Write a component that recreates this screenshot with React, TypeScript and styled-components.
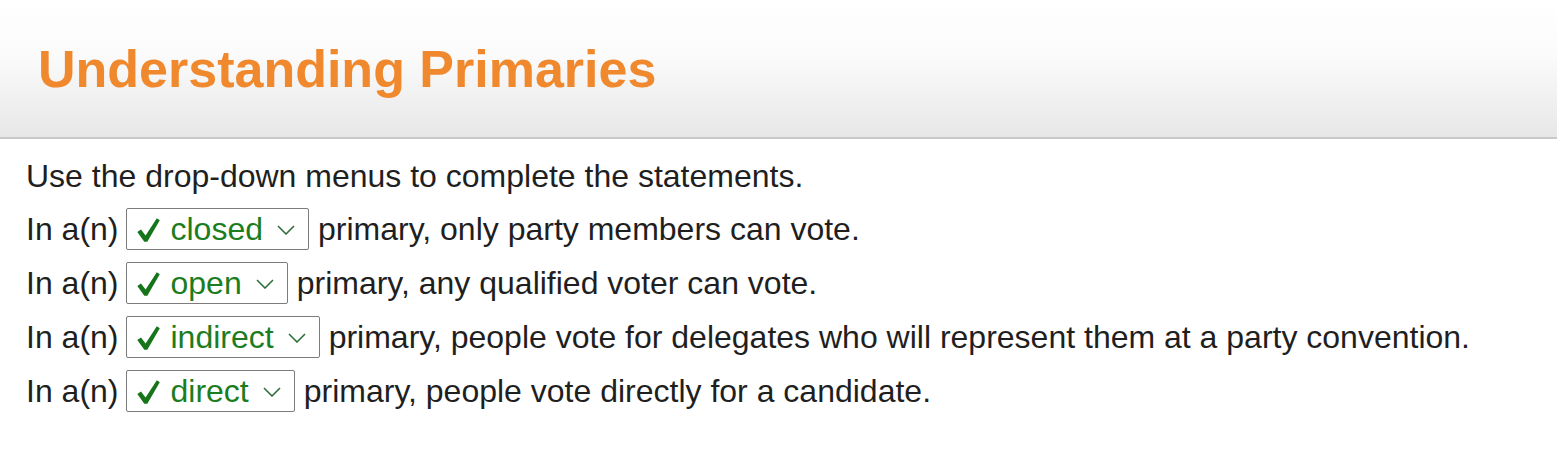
import React from "react";
import styled, { createGlobalStyle } from "styled-components";

const Global = createGlobalStyle`
  html, body { margin: 0; padding: 0; background: #ffffff; }
  body { font-family: "Liberation Sans", Arial, sans-serif; }
`;

const Header = styled.header`
  height: 137px;
  box-sizing: content-box;
  padding: 0 0 0 38px;
  display: flex;
  align-items: flex-start;
  background: linear-gradient(to bottom, #ffffff 0%, #fbfbfb 40%, #e7e7e7 100%);
  border-bottom: 2px solid #c9c9c9;
`;

const Title = styled.h1`
  margin: 39px 0 0 0;
  font-family: "Liberation Sans", Arial, sans-serif;
  font-weight: bold;
  font-size: 52px;
  line-height: 60px;
  color: #f0892e;
`;

const Body = styled.main`
  padding: 9px 26px 0 26px;
  color: #1f1f1f;
  font-size: 32px;
`;

const Line = styled.div<{ $shift?: number }>`
  display: flex;
  align-items: center;
  gap: 8px;
  height: 54px;
  box-sizing: border-box;
  padding-top: ${(p) => p.$shift ?? 0}px;
  white-space: nowrap;
`;

const Select = styled.div`
  display: flex;
  align-items: center;
  height: 42px;
  box-sizing: border-box;
  margin-right: 1px;
  padding: 0 13px 0 10px;
  border: 1px solid #7c7c7c;
  border-radius: 2px;
  background: #ffffff;
  color: #1c7d1f;
`;

const Check = styled.svg`
  width: 23px;
  height: 24px;
  margin-right: 10px;
  margin-top: 1px;
  flex: none;
`;

const Choice = styled.span`
  margin-right: 14px;
`;

const Chevron = styled.svg`
  width: 18px;
  height: 10px;
  flex: none;
  margin-top: 2px;
`;

type Row = { answer: string; rest: string };

const rows: Row[] = [
  { answer: "closed", rest: "primary, only party members can vote." },
  { answer: "open", rest: "primary, any qualified voter can vote." },
  {
    answer: "indirect",
    rest: "primary, people vote for delegates who will represent them at a party convention.",
  },
  { answer: "direct", rest: "primary, people vote directly for a candidate." },
];

const Dropdown = ({ value }: { value: string }) => (
  <Select>
    <Check viewBox="0 0 23 24" aria-hidden>
      <path
        d="M0.3 14 L4 11.4 L8.6 17.4 L19.8 0.3 L22.8 2.2 L10.3 23.7 L7.3 23.7 Z"
        fill="#16741b"
      />
    </Check>
    <Choice>{value}</Choice>
    <Chevron viewBox="0 0 18 10" aria-hidden>
      <polyline points="1,1 9,9 17,1" fill="none" stroke="#2f6f3c" strokeWidth="1.6" />
    </Chevron>
  </Select>
);

export default function App() {
  return (
    <>
      <Global />
      <Header>
        <Title>Understanding Primaries</Title>
      </Header>
      <Body>
        <Line $shift={3}>Use the drop-down menus to complete the statements.</Line>
        {rows.map((r) => (
          <Line key={r.answer}>
            <span>In a(n)</span>
            <Dropdown value={r.answer} />
            <span>{r.rest}</span>
          </Line>
        ))}
      </Body>
    </>
  );
}
